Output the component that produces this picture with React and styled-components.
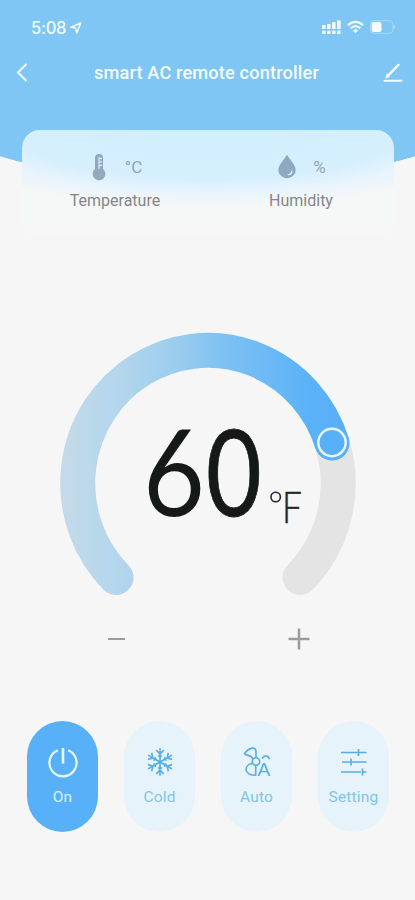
import React from "react";
import styled, { createGlobalStyle } from "styled-components";

const GlobalStyle = createGlobalStyle`
  * { box-sizing: border-box; }
  body { margin: 0; background: #f6f6f6; }
`;

const Screen = styled.main`
  width: 415px;
  height: 900px;
  overflow: hidden;
  display: flex;
  flex-direction: column;
  background: #f6f6f6;
  font-family: Roboto, "Liberation Sans", sans-serif;
`;

const Header = styled.header`
  flex: none;
  height: 130px;
  color: #f4fbff;
  background: #7fc6f4;
`;

const StatusBar = styled.div`
  height: 54px;
  padding: 0 19px 0 31px;
  display: flex;
  align-items: center;
  justify-content: space-between;
`;

const Clock = styled.div`
  display: flex;
  align-items: center;
  gap: 4px;
  padding-top: 2px;
  font: 500 16.6px/20px Inter, sans-serif;
  letter-spacing: -0.3px;
`;

const StatusIcons = styled.div`
  display: flex;
  align-items: center;
  gap: 6px;
`;

const TitleBar = styled.div`
  height: 38px;
  padding: 0 12px 0 14px;
  display: flex;
  align-items: center;
  justify-content: space-between;
`;

const Title = styled.h1`
  margin: 0;
  font-size: 18.2px;
  line-height: 22px;
  font-weight: 500;
  letter-spacing: 0.15px;
`;

const IconButton = styled.button`
  display: flex;
  padding: 0;
  border: 0;
  background: none;
  color: inherit;
`;

const Readings = styled.section`
  flex: none;
  height: 112px;
  padding: 0 21px 0 22px;
  background: radial-gradient(ellipse 300px 95px at 50% -42px, #7fc6f4 99.4%, #f6f6f6 100%);
`;

const ReadingsCard = styled.div`
  height: 108px;
  display: grid;
  grid-template-columns: 1fr 1fr;
  border-radius: 18px;
  background:
    radial-gradient(ellipse 300px 76px at 50% 0, #d1effd 0%, #d5effd 64%, #e9f4fc 83%, rgba(247, 247, 248, 0) 100%),
    linear-gradient(#dcf0fb 0%, #e7f3fa 35%, #f6f7f8 54%, #f7f7f7 100%);
`;

const Reading = styled.div`
  display: flex;
  flex-direction: column;
  align-items: center;
  padding-top: 22px;
`;

const ReadingValue = styled.div`
  height: 29px;
  display: flex;
  align-items: center;
  gap: ${(p) => p.$gap}px;
  padding-left: ${(p) => p.$shift}px;
  color: #92a5b5;
  font-size: ${(p) => p.$size}px;
`;

const ReadingLabel = styled.div`
  margin-top: 10px;
  font-size: 16px;
  line-height: 20px;
  color: #848688;
`;

const Dial = styled.section`
  flex: none;
  height: 374px;
  padding-top: 80px;
`;

const DialFace = styled.svg`
  display: block;
`;

const Digit = styled.text`
  font-family: Lato, sans-serif;
  font-weight: 400;
  font-size: 120px;
  fill: #171919;
`;

const Unit = styled.text`
  font-family: Lato, sans-serif;
  font-weight: 300;
  font-size: 43px;
  fill: #252727;
  stroke: #252727;
  stroke-width: 0.5px;
`;

const Stepper = styled.div`
  flex: none;
  height: 46px;
  padding: 0 103px;
  display: flex;
  align-items: center;
  justify-content: space-between;
  color: #9b9c9d;
`;

const Modes = styled.nav`
  flex: none;
  display: flex;
  justify-content: space-between;
  padding: 59px 26px 0 27px;
`;

const ModeButton = styled.button`
  width: 71px;
  height: 111px;
  padding: 24px 0 0;
  border: 0;
  border-radius: 36px;
  display: flex;
  flex-direction: column;
  align-items: center;
  gap: 8px;
  background: ${(p) => (p.$active ? "#58b0f8" : "#e6f3fa")};
  color: ${(p) => (p.$active ? "#ecf8ff" : "#55aee6")};
`;

const ModeLabel = styled.span`
  font: 400 15.5px/20px Roboto, sans-serif;
  color: ${(p) => (p.$active ? "#d9f0ff" : "#83c3e9")};
  letter-spacing: 0.2px;
`;

const ModeIcon = styled.svg`
  width: 34px;
  height: 34px;
  fill: none;
  stroke: currentColor;
`;

const AutoLetter = styled.text`
  font: 400 19px "Liberation Sans", sans-serif;
  fill: currentColor;
  stroke: none;
`;

const LocationIcon = () => (
  <svg width="12" height="12" viewBox="0 0 12 12" fill="none" stroke="currentColor" strokeWidth="1.5" strokeLinejoin="round">
    <path d="M1 5.3 10.8 1 6.8 11 5.7 6.1Z" />
  </svg>
);

const SignalIcon = () => (
  <svg width="19" height="15" viewBox="0 0 19 15" fill="currentColor">
    <path d="M0 5h3.6v4H0zM5 4h3.6v5H5zM10 2.3h3.6V9H10zM15 .5h3.6V9H15z" />
    {[0, 5, 10, 15].map((x) => (
      <rect key={x} x={x} y="10.5" width="3.6" height="3.5" rx="1" />
    ))}
  </svg>
);

const WifiIcon = () => (
  <svg width="17" height="14" viewBox="0 0 17 14" fill="none" stroke="currentColor" strokeWidth="2.2">
    <path d="M1 5.2C5.5.8 11.5.8 16 5.2M3.7 8.3c3-2.8 6.6-2.8 9.6 0" />
    <path d="M5.9 10.4c1.6-1.4 3.6-1.4 5.2 0L8.5 13.3Z" fill="currentColor" stroke="none" />
  </svg>
);

const BatteryIcon = () => (
  <svg width="26" height="14" viewBox="0 0 26 14">
    <rect x="0.5" y="0.7" width="22.5" height="12.6" rx="3.5" fill="none" stroke="#a9dafa" />
    <rect x="1.7" y="2" width="9.8" height="10" rx="2" fill="currentColor" />
    <path d="M24.2 4.7q1.8 2.3 0 4.6Z" fill="#c5e7fc" />
  </svg>
);

const BackIcon = () => (
  <svg width="16" height="22" viewBox="0 0 16 22" fill="none" stroke="currentColor" strokeWidth="2">
    <path d="M12.5 2 4 10.500l8.500 8.500" />
  </svg>
);

const EditIcon = () => (
  <svg width="20" height="20" viewBox="0 0 20 20" fill="none" stroke="currentColor" strokeLinecap="round">
    <path d="M1.500 17.700H18.500" strokeWidth="1.900" />
    <path d="M4.200 13.300 15.500 1.900" strokeWidth="2.400" />
    <path d="M2.600 14.800 4 10.800 6.500 13.300Z" fill="currentColor" strokeWidth="0.500" />
  </svg>
);

const ThermometerIcon = () => (
  <svg width="14" height="28" viewBox="0 0 14 28">
    <path d="M3 16V5a4 4 0 0 1 8 0v11a6.400 6.400 0 1 1-8 0Z" fill="#91a8bf" />
    <path d="M7 4v12M7 5.500h3M7 9h3M7 12.500h3" stroke="#d5e9f6" strokeWidth="1.300" fill="none" />
  </svg>
);

const DropIcon = () => (
  <svg width="18" height="25" viewBox="0 0 18 25">
    <path d="M9 .8C6 6 .3 11 .3 16.200a8.700 8 0 0 0 17.400 0C17.700 11 12 6 9 .8Z" fill="#8fa8c2" />
    <path d="M8.600 20.800c3.200-.6 4.800-2.600 5.400-5.400 1.500 3.800-1.200 6.900-5.400 5.400Z" fill="#e3f3fc" />
  </svg>
);

const PowerIcon = () => (
  <ModeIcon viewBox="0 0 34 34" strokeWidth="2.200">
    <path d="M11.800 5.200a13.600 13.600 0 1 0 10.400 0" />
    <path d="M17 3v15.500" strokeWidth="2.600" />
  </ModeIcon>
);

const ARMS = [0, 60, 120, 180, 240, 300];

const SnowIcon = () => (
  <ModeIcon viewBox="0 0 34 34" strokeWidth="1.600">
    {ARMS.map((angle) => (
      <path key={angle} d="M17 17V3.200M13.200 5.200 17 8.800l3.800-3.600" transform={`rotate(${angle} 17 17)`} />
    ))}
    {ARMS.map((angle) => (
      <path key={angle} d="M15.200 10.300 17 12l1.800-1.700" transform={`rotate(${angle} 17 17)`} />
    ))}
  </ModeIcon>
);

const FanIcon = () => (
  <ModeIcon viewBox="0 0 34 34" strokeWidth="1.600">
    <circle cx="16" cy="16.500" r="3.700" />
    <path d="M16 13V6.500Q15.600 2.500 12 3.100 7.600 4.200 4.400 8.600C7.500 11.600 10.500 9 13 13.800" />
    <path d="M12.700 18.500C9 18.600 6.200 21 5.900 24.600q1.200 5.600 9.800 5.700V20" />
    <path d="M22 13.400q4.600-5.500 7.700.8" />
    <AutoLetter x="17.500" y="30.500">A</AutoLetter>
  </ModeIcon>
);

const SettingIcon = () => (
  <ModeIcon viewBox="0 0 34 34" strokeWidth="1.700">
    <path d="M4 7.500h16.500M21.500 4v7M22 7.500h7.500M5 17h8M14 13.500v7M14 17h15.500M4 27h20M25.500 23.500v7M26 27h3.500" />
  </ModeIcon>
);

const MODES = [
  { label: "On", Icon: PowerIcon, active: true },
  { label: "Cold", Icon: SnowIcon },
  { label: "Auto", Icon: FanIcon },
  { label: "Setting", Icon: SettingIcon },
];

export default function App() {
  return (
    <>
      <GlobalStyle />
      <Screen>
        <Header>
          <StatusBar>
            <Clock>5:08 <LocationIcon /></Clock>
            <StatusIcons><SignalIcon /><WifiIcon /><BatteryIcon /></StatusIcons>
          </StatusBar>
          <TitleBar>
            <IconButton aria-label="Back"><BackIcon /></IconButton>
            <Title>smart AC remote controller</Title>
            <IconButton aria-label="Edit"><EditIcon /></IconButton>
          </TitleBar>
        </Header>
        <Readings>
          <ReadingsCard>
            <Reading>
              <ReadingValue $gap={19} $shift={4} $size={17}><ThermometerIcon />°C</ReadingValue>
              <ReadingLabel>Temperature</ReadingLabel>
            </Reading>
            <Reading>
              <ReadingValue $gap={17} $shift={2} $size={17}><DropIcon />%</ReadingValue>
              <ReadingLabel>Humidity</ReadingLabel>
            </Reading>
          </ReadingsCard>
        </Readings>
        <Dial>
          <DialFace width="415" height="294" viewBox="0 322 415 294">
            <defs>
              <linearGradient id="heat" gradientUnits="userSpaceOnUse" x1="60" y1="450" x2="350" y2="450">
                <stop offset="0" stopColor="#c4dae8" />
                <stop offset="0.2" stopColor="#b4d6ec" />
                <stop offset="0.4" stopColor="#9ccdee" />
                <stop offset="0.55" stopColor="#80c2f1" />
                <stop offset="0.85" stopColor="#5bb2f8" />
                <stop offset="1" stopColor="#58aff8" />
              </linearGradient>
            </defs>
            <g fill="none" strokeWidth="35" strokeLinecap="round">
              <path d="M332 443A130.200 133 0 0 1 300 577.500" stroke="#e4e4e4" />
              <path d="M116 577.500A130.200 133 0 1 1 332 443" stroke="url(#heat)" />
            </g>
            <circle cx="332" cy="442.500" r="13.700" fill="#58b0f8" stroke="#e9f6ff" strokeWidth="2.400" />
            <Digit transform="translate(143 516) scale(.89 1)">6</Digit>
            <Digit transform="translate(206 516) scale(.8 1)" stroke="#171919" strokeWidth="0.8">0</Digit>
            <circle cx="275.700" cy="497" r="4.700" fill="none" stroke="#252727" strokeWidth="1.600" />
            <Unit transform="translate(282 523) scale(.82 1)">F</Unit>
          </DialFace>
        </Dial>
        <Stepper>
          <IconButton aria-label="Decrease">
            <svg width="26" height="26" viewBox="0 0 26 26" stroke="currentColor" strokeWidth="2"><path d="M5 13h17" /></svg>
          </IconButton>
          <IconButton aria-label="Increase">
            <svg width="26" height="26" viewBox="0 0 26 26" stroke="currentColor" strokeWidth="2.500"><path d="M2.500 13h21M13 2.500v21" /></svg>
          </IconButton>
        </Stepper>
        <Modes>
          {MODES.map(({ label, Icon, active }) => (
            <ModeButton key={label} $active={active}>
              <Icon />
              <ModeLabel $active={active}>{label}</ModeLabel>
            </ModeButton>
          ))}
        </Modes>
      </Screen>
    </>
  );
}
